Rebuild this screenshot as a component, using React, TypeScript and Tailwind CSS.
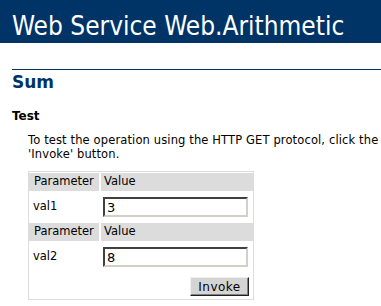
import React from "react";

const font = "font-['DejaVu_Sans',Verdana,sans-serif]";

const ParamHeader = () => (
  <div className="flex h-[18px] items-center">
    <div className="flex h-full w-[70px] items-center bg-[#dcdcdc] pl-[5px]">Parameter</div>
    <div className="ml-[2px] flex h-full flex-1 items-center bg-[#dcdcdc] pl-[3px]">Value</div>
  </div>
);

const ParamRow = ({ name, value }: { name: string; value: string }) => (
  <div className="flex h-[32px] items-center">
    <div className="w-[70px] pl-[4px]">{name}</div>
    <div className="ml-[4px]">
      <input
        readOnly
        value={value}
        className="box-border h-[20px] w-[145px] border-2 border-t-[#404040] border-l-[#404040] border-r-[#d4d0c8] border-b-[#d4d0c8] bg-white px-[2px] text-[13px] text-black outline-none"
      />
    </div>
  </div>
);

export default function App() {
  return (
    <div className={`${font} h-[306px] w-[381px] overflow-hidden bg-white text-black`}>
      <div className="h-[43px] bg-[#003366] pl-[12px] pt-[11px] font-['DejaVu_Sans_Condensed','DejaVu_Sans',sans-serif] text-[26px] leading-[30px] text-white whitespace-nowrap">
        Web Service Web.Arithmetic
      </div>

      <div className="ml-[12px] mt-[26px] border-t border-[#003366] pt-[2px]">
        <h2 className="text-[17px] font-bold leading-[20px] text-[#003366]">Sum</h2>
      </div>

      <h3 className="ml-[12px] mt-[16px] text-[12px] font-bold leading-[16px]">Test</h3>

      <p className="ml-[28px] mt-[9px] text-[11.5px] leading-[14px] tracking-[0.13px] whitespace-nowrap">
        To test the operation using the HTTP GET protocol, click the
        <br />
        'Invoke' button.
      </p>

      <div className="ml-[28px] mt-[10px] w-[226px] border border-[#dcdcdc] pt-px text-[11.5px]">
        <ParamHeader />
        <ParamRow name="val1" value="3" />
        <ParamHeader />
        <ParamRow name="val2" value="8" />
        <div className="flex h-[26px] items-start justify-end pr-[4px] pt-[4px]">
          <button className="box-border h-[19px] w-[59px] border border-t-[#f0f0f0] border-l-[#f0f0f0] border-r-[#202020] border-b-[#202020] bg-[#d4d4d4] text-[12px] leading-none tracking-[0.5px] shadow-[inset_-1px_-1px_0_#808080]">
            Invoke
          </button>
        </div>
      </div>
    </div>
  );
}
